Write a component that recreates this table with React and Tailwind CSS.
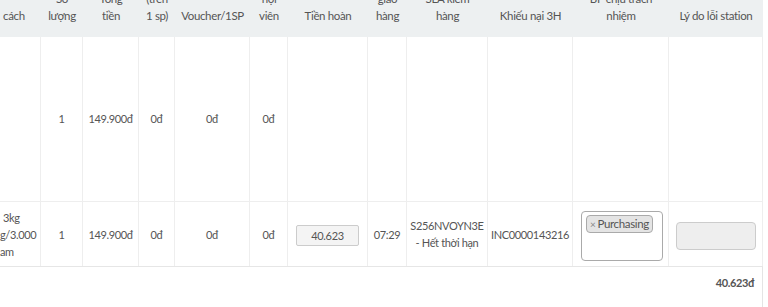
const cols = 'grid grid-cols-[41px_42px_56px_36px_75px_38px_80px_39px_81px_85px_96px_94px]'

function Head({ lines, align = 'center', className = '' }) {
  return (
    <div className={`flex flex-col justify-end overflow-hidden h-[37px] pb-[13px] leading-[17px] ${align === 'left' ? 'items-start pl-[3px]' : 'items-center text-center'} ${className}`}>
      {lines.map((l, i) => (
        <span key={i} className="whitespace-nowrap">{l}</span>
      ))}
    </div>
  )
}

function Cell({ children, className = '' }) {
  return (
    <div className={`flex items-center justify-center text-center border-r border-[#eeeeee] ${className}`}>
      {children}
    </div>
  )
}

export default function App() {
  return (
    <div
      className="w-[768px] h-[307px] overflow-hidden bg-white text-[11px] tracking-[-0.35px] text-[#555555]"
      style={{ fontFamily: 'Lato, sans-serif' }}
    >
      <div className="w-[763px]">
        {/* header, scrolled so only the last lines show */}
        <div className={`${cols} bg-[#edf0f1] text-[#555555] text-[11.5px]`}>
          <Head lines={['cách']} align="left" />
          <Head lines={['Số', 'lượng']} />
          <Head lines={['Tổng', 'tiền']} />
          <Head lines={['(trên', '1 sp)']} />
          <Head lines={['Voucher/1SP']} />
          <Head lines={['hội', 'viên']} />
          <Head lines={['Tiền hoàn']} />
          <Head lines={['giao', 'hàng']} />
          <Head lines={['SLA kiểm', 'hàng']} />
          <Head lines={['Khiếu nại 3H']} />
          <Head lines={['BP chịu trách', 'nhiệm']} />
          <Head lines={['Lý do lỗi station']} />
        </div>

        {/* row 1 */}
        <div className={`${cols} h-[165px] border-b border-[#eeeeee]`}>
          <Cell />
          <Cell>1</Cell>
          <Cell>149.900đ</Cell>
          <Cell>0đ</Cell>
          <Cell>0đ</Cell>
          <Cell>0đ</Cell>
          <Cell />
          <Cell />
          <Cell />
          <Cell />
          <Cell />
          <Cell className="border-[#e4e4e4]" />
        </div>

        {/* row 2 */}
        <div className={`${cols} h-[65px] border-b border-[#e6e6e6] leading-[17px]`}>
          <div className="flex flex-col justify-center items-start border-r border-[#eeeeee] overflow-hidden">
            <span className="pl-[3px] whitespace-nowrap">3kg</span>
            <span className="whitespace-nowrap">g/3.000</span>
            <span className="whitespace-nowrap">am</span>
          </div>
          <Cell>1</Cell>
          <Cell>149.900đ</Cell>
          <Cell>0đ</Cell>
          <Cell>0đ</Cell>
          <Cell>0đ</Cell>
          <Cell className="px-[8px]">
            <div className="w-[66px] h-[21px] mt-[2px] flex items-center justify-center bg-[#f4f4f4] border border-[#cccccc] rounded-[2px]">
              40.623
            </div>
          </Cell>
          <Cell>07:29</Cell>
          <Cell className="flex-col">
            <span className="whitespace-nowrap">S256NVOYN3E</span>
            <span className="whitespace-nowrap">- Hết thời hạn</span>
          </Cell>
          <Cell>INC0000143216</Cell>
          <Cell className="justify-start pl-[8px]">
            <div className="w-[82px] h-[50px] mt-[3px] bg-white border border-[#aaaaaa] rounded-[4px] pt-[3px] pl-[4px] flex items-start">
              <span className="flex items-center h-[18px] px-[3px] bg-[#e4e4e4] border border-[#aaaaaa] rounded-[4px] text-[#555555] text-[11.5px] leading-none">
                <span className="text-[#888888] text-[10px] mr-[2px]">×</span>Purchasing
              </span>
            </div>
          </Cell>
          <Cell className="justify-start pl-[7px] border-[#e4e4e4]">
            <div className="w-[80px] h-[28px] mt-[3px] bg-[#eeeeee] border border-[#cccccc] rounded-[4px]" />
          </Cell>
        </div>

        {/* footer total */}
        <div className="h-[40px] flex items-start justify-end pt-[8px] pr-[8px] border-r border-[#e4e4e4] font-bold text-[#555555]">
          40.623đ
        </div>
      </div>
    </div>
  )
}
